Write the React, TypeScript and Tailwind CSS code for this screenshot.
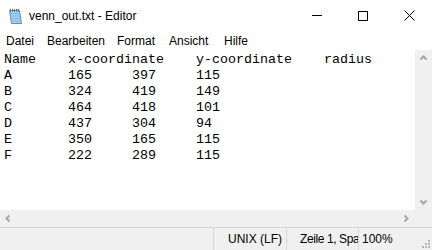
import React from 'react'

const LINES = [
  'Name\tx-coordinate\ty-coordinate\tradius',
  'A\t165\t397\t115',
  'B\t324\t419\t149',
  'C\t464\t418\t101',
  'D\t437\t304\t94',
  'E\t350\t165\t115',
  'F\t222\t289\t115',
]

// menu labels with the width of their hit area
const MENU = [
  { label: 'Datei', w: 'w-[41px]' },
  { label: 'Bearbeiten', w: 'w-[70px]' },
  { label: 'Format', w: 'w-[52px]' },
  { label: 'Ansicht', w: 'w-[55px]' },
  { label: 'Hilfe', w: 'w-[40px]' },
]

function NotepadIcon() {
  return (
    <svg width="16" height="16" viewBox="0 0 16 16">
      <path d="M2.5 2.5 L12.5 2.5 L14.5 15.5 L4.5 15.5 Z" fill="#a9d3ef" stroke="#5a8fb5" strokeWidth="1" />
      <path d="M4 5.5 H12.5 M4.4 8 H12.9 M4.8 10.5 H13.3 M5.2 13 H13.7" stroke="#7fb2d6" strokeWidth="1" />
      {[3.5, 5.5, 7.5, 9.5, 11.5].map(x => (
        <path key={x} d={`M${x} 0.8 V3.8`} stroke="#6b6b6b" strokeWidth="1" />
      ))}
    </svg>
  )
}

function Chevron({ dir }: { dir: 'up' | 'down' | 'left' | 'right' }) {
  const d = {
    up: 'M1.5 5.5 L4.5 2.5 L7.5 5.5',
    down: 'M1.5 3.5 L4.5 6.5 L7.5 3.5',
    left: 'M5.5 1.5 L2.5 4.5 L5.5 7.5',
    right: 'M3.5 1.5 L6.5 4.5 L3.5 7.5',
  }[dir]
  return (
    <svg width="9" height="9" viewBox="0 0 9 9">
      <path d={d} fill="none" stroke="#a6a6a6" strokeWidth="2" />
    </svg>
  )
}

export default function App() {
  return (
    <div
      className="w-[432px] h-[250px] bg-white flex flex-col overflow-hidden text-black"
      style={{ fontFamily: '"Liberation Sans", Arial, sans-serif' }}
    >
      {/* title bar */}
      <div className="h-[31px] flex items-center shrink-0">
        <div className="pl-[7px] pr-[6px] flex items-center">
          <NotepadIcon />
        </div>
        <span className="text-[12px] leading-none">venn_out.txt - Editor</span>
        <div className="ml-auto flex h-full">
          <button type="button" className="w-[46px] h-full flex items-center justify-center">
            <span className="block w-[10px] h-px bg-black" />
          </button>
          <button type="button" className="w-[46px] h-full flex items-center justify-center">
            <span className="block w-[10px] h-[10px] border border-black" />
          </button>
          <button type="button" className="w-[46px] h-full flex items-center justify-center">
            <svg width="11" height="11" viewBox="0 0 11 11">
              <path d="M0.5 0.5 L10.5 10.5 M10.5 0.5 L0.5 10.5" stroke="#000" strokeWidth="1" />
            </svg>
          </button>
        </div>
      </div>

      {/* menu bar */}
      <div className="h-[19px] flex items-center text-[12px] pl-[6px] shrink-0">
        {MENU.map(m => (
          <span key={m.label} className={`${m.w} leading-none`}>{m.label}</span>
        ))}
      </div>

      {/* editor */}
      <div className="h-[160px] flex shrink-0">
        <div
          className="flex-1 pt-[2px] pl-[4px] whitespace-pre text-[13.33px] leading-[16px] [tab-size:8] overflow-hidden"
          style={{ fontFamily: '"Liberation Mono", monospace' }}
        >
          {LINES.map(l => (
            <div key={l}>{l}</div>
          ))}
        </div>
        <div className="w-[17px] bg-[#f0f0f0] flex flex-col items-center justify-between py-[4px]">
          <Chevron dir="up" />
          <Chevron dir="down" />
        </div>
      </div>

      {/* horizontal scrollbar */}
      <div className="h-[17px] bg-[#f0f0f0] flex items-center justify-between pl-[4px] pr-[22px] shrink-0">
        <Chevron dir="left" />
        <Chevron dir="right" />
      </div>

      {/* status bar */}
      <div className="flex-1 bg-[#f0f0f0] border-t border-[#d7d7d7] flex text-[12px] relative">
        <div className="w-[214px] border-r border-[#d7d7d7]" />
        <div className="w-[73px] border-r border-[#d7d7d7] flex items-center pl-[14px]">UNIX (LF)</div>
        <div className="w-[72px] border-r border-[#d7d7d7] flex items-center pl-[13px] overflow-hidden whitespace-nowrap tracking-[-0.4px]">
          Zeile 1, Spa
        </div>
        <div className="flex items-center pl-[3px]">100%</div>
        <svg className="absolute right-[2px] bottom-[2px]" width="10" height="10" viewBox="0 0 10 10">
          {[[8, 2], [5, 5], [8, 5], [2, 8], [5, 8], [8, 8]].map(([x, y]) => (
            <rect key={`${x}-${y}`} x={x} y={y} width="2" height="2" fill="#b5b5b5" />
          ))}
        </svg>
      </div>
    </div>
  )
}
